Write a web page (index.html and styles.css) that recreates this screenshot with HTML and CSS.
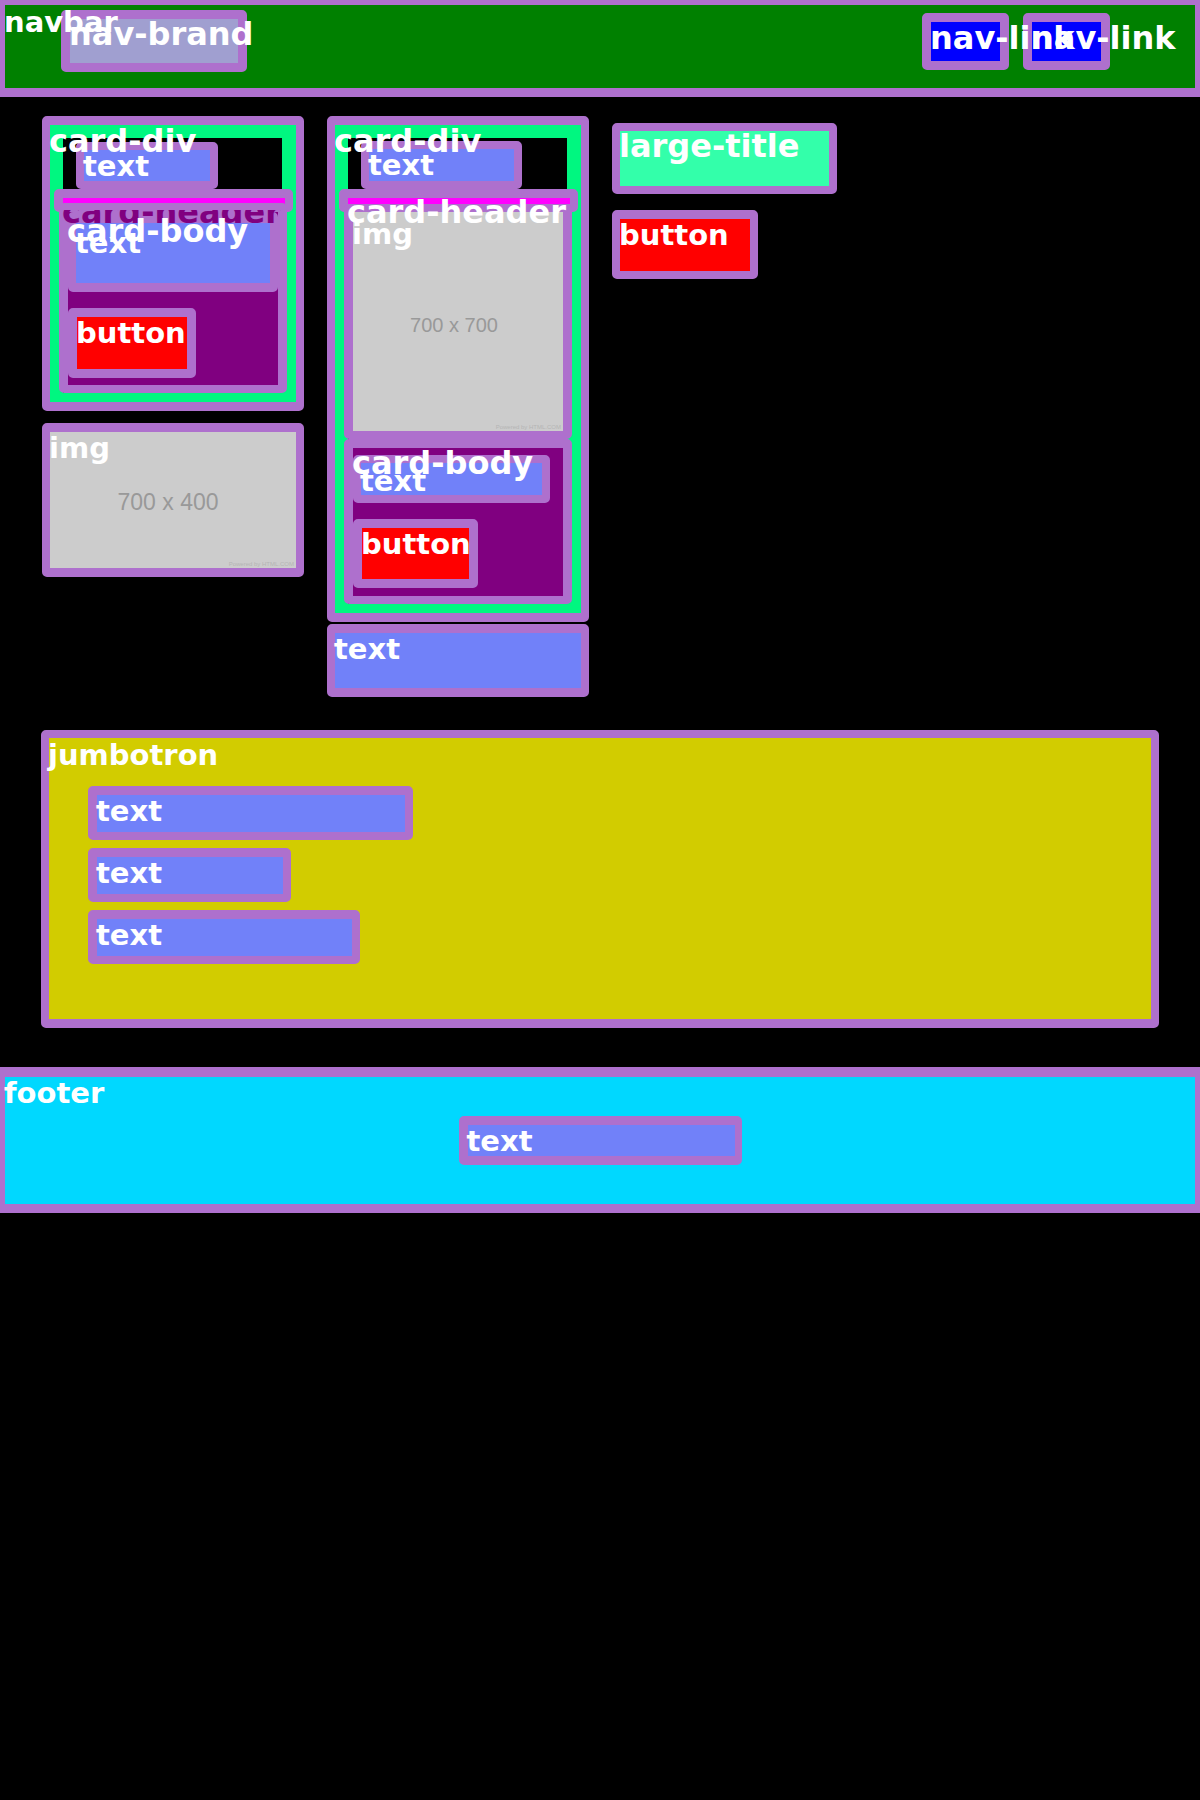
FILE: index.html
```html
<!DOCTYPE html>
<html lang="en">
<head>
  <meta charset="UTF-8">
  <title>Layout Wireframe</title>
  <link rel="stylesheet" href="styles.css">
</head>
<body>
  <nav class="navbar box">
    <span class="lbl">navbar</span>
    <div class="nav-brand box"><span class="lbl lbl-dash">nav-brand</span></div>
    <div class="nav-links">
      <div class="nav-link box"><span class="lbl lbl-dash">nav-link</span></div>
      <div class="nav-link box"><span class="lbl lbl-dash">nav-link</span></div>
    </div>
  </nav>

  <main class="main">
    <div class="col">
      <div class="card-div box">
        <span class="lbl lbl-dash">card-div</span>
        <div class="card-content">
          <div class="text card-text card-text-a box"><span class="lbl">text</span></div>
          <div class="card-header box"><span class="lbl lbl-dash lbl-buried">card-header</span></div>
          <div class="card-body card-body-a box">
            <span class="lbl lbl-dash">card-body</span>
            <div class="text body-text-a box"><span class="lbl">text</span></div>
            <div class="button btn-a box"><span class="lbl">button</span></div>
          </div>
        </div>
      </div>
      <div class="img img-wide box">
        <span class="lbl">img</span>
        <span class="ph-text ph-400">700 x 400</span>
        <span class="ph-credit">Powered by HTML.COM</span>
      </div>
    </div>

    <div class="col">
      <div class="card-div box">
        <span class="lbl lbl-dash">card-div</span>
        <div class="card-content">
          <div class="text card-text card-text-b box"><span class="lbl">text</span></div>
          <div class="card-header box"><span class="lbl lbl-dash">card-header</span></div>
          <div class="img img-card box">
            <span class="lbl">img</span>
            <span class="ph-text">700 x 700</span>
            <span class="ph-credit">Powered by HTML.COM</span>
          </div>
          <div class="card-body card-body-b box">
            <span class="lbl lbl-dash">card-body</span>
            <div class="text body-text-b box"><span class="lbl">text</span></div>
            <div class="button btn-b box"><span class="lbl">button</span></div>
          </div>
        </div>
      </div>
      <div class="text col-text box"><span class="lbl">text</span></div>
    </div>

    <div class="col col-side">
      <div class="large-title box"><span class="lbl lbl-dash">large-title</span></div>
      <div class="button side-button box"><span class="lbl">button</span></div>
    </div>
  </main>

  <section class="jumbotron box">
    <span class="lbl">jumbotron</span>
    <div class="text jumbo-text jt-long box"><span class="lbl">text</span></div>
    <div class="text jumbo-text jt-short box"><span class="lbl">text</span></div>
    <div class="text jumbo-text jt-mid box"><span class="lbl">text</span></div>
  </section>

  <footer class="footer box">
    <span class="lbl">footer</span>
    <div class="text footer-text box"><span class="lbl">text</span></div>
  </footer>
</body>
</html>
```

FILE: styles.css
```css
* {
  box-sizing: border-box;
}
body {
  margin: 0;
  background: #000;
  overflow-x: hidden;
  font-family: "DejaVu Sans", sans-serif;
}

/* annotated boxes */
.box {
  position: relative;
  border: 8px solid #ae70cd;
  border-radius: 5px;
}
.lbl {
  position: absolute;
  top: 2px;
  left: -1px;
  z-index: 1;
  color: #fff;
  font: bold 29px/1 "DejaVu Sans", sans-serif;
  white-space: nowrap;
}
.lbl-dash {
  font-size: 32px;
  top: -1px;
}
.text {
  background: #7181f9;
}
.button {
  background: #ff0000;
}

/* navbar */
.navbar {
  display: flex;
  align-items: flex-start;
  height: 101px;
  margin: -4px -4px 0;
  padding: 5px 85px 0 56px;
  border-width: 9px;
  background: #008000;
}
.navbar > .lbl {
  top: 3px;
}
.nav-brand {
  width: 186px;
  height: 62px;
  border-width: 9px;
  background: #a09fd0;
}
.nav-links {
  display: flex;
  gap: 14px;
  margin: 3px 0 0 auto;
}
.nav-link {
  width: 87px;
  height: 57px;
  border-width: 9px;
  background: #0000ff;
}
.nav-link .lbl {
  top: 0;
}

/* cards */
.main {
  display: flex;
  align-items: flex-start;
  gap: 23px;
  padding: 19px 0 0 42px;
}
.col {
  display: flex;
  flex-direction: column;
  align-items: flex-start;
  width: 262px;
}
.col-side {
  width: 225px;
  padding-top: 7px;
}
.card-div {
  width: 262px;
  border-width: 9px 8px;
  padding: 13px 14px 9px 13px;
  background: #00f780;
}
.card-div > .lbl {
  top: 0;
}
.card-content {
  background: #000;
  padding-top: 3px;
}
.card-text {
  height: 48px;
  margin-left: 13px;
}
.card-text-a {
  width: 142px;
  height: 47px;
  margin-top: 1px;
}
.card-text-b {
  width: 161px;
}
.card-header {
  height: 23px;
  margin: 0 -11px 0 -9px;
  border-width: 9px 8px 8px 9px;
  background: #ff00ff;
}
.card-header .lbl {
  top: -2px;
}
.lbl-buried {
  top: -1px;
  color: #800080;
  clip-path: inset(14px 0 0 0);
}
.card-body {
  margin: 0 -5px 0 -4px;
  border-width: 9px 9px 8px;
  background: #800080;
}
.card-body-a {
  margin-top: -9px;
  padding-bottom: 7px;
}
.card-body-a > .lbl {
  top: 3px;
}
.card-body-b {
  padding: 7px 0 8px;
}
.body-text-a {
  height: 80px;
  border-width: 11px 8px 9px;
}
.body-text-a .lbl {
  top: 6px;
}
.body-text-b {
  width: 197px;
  height: 48px;
}
.body-text-b .lbl {
  top: 4px;
}
.card-body .button {
  margin-top: 16px;
  border-width: 9px;
}
.btn-a {
  width: 128px;
  height: 70px;
}
.btn-b {
  width: 125px;
  height: 69px;
}

/* placeholder images */
.img {
  display: flex;
  align-items: center;
  justify-content: center;
  overflow: hidden;
  background: #ccc;
}
.img-card {
  height: 235px;
  margin: -8px -5px 0 -4px;
  padding: 8px 8px 0 0;
  border-width: 8px 9px;
}
.img-card .lbl {
  top: 8px;
}
.img-wide {
  width: 262px;
  height: 154px;
  margin-top: 12px;
  padding: 4px 10px 0 0;
  border-width: 9px 8px;
}
.ph-text {
  color: #999;
  font: 20px "Liberation Sans", Arial, sans-serif;
}
.ph-400 {
  font-size: 23px;
}
.ph-credit {
  position: absolute;
  right: 2px;
  bottom: 1px;
  color: #b5b5b5;
  font: 6px "Liberation Sans", Arial, sans-serif;
}

.col-text {
  width: 262px;
  height: 73px;
  margin-top: 2px;
  border-width: 9px 8px;
}
.large-title {
  width: 225px;
  height: 71px;
  background: #33ffaa;
}
.side-button {
  width: 146px;
  height: 69px;
  margin-top: 16px;
  border-width: 9px 8px 8px;
}

/* jumbotron */
.jumbotron {
  display: flex;
  flex-direction: column;
  align-items: flex-start;
  gap: 8px;
  height: 298px;
  margin: 33px 41px 0;
  padding: 48px 0 0 39px;
  border-width: 8px 8px 9px;
  background: #d2cc00;
}
.jumbotron > .lbl {
  top: 3px;
}
.jumbo-text {
  height: 54px;
  border-width: 9px 8px 8px 9px;
}
.jt-long {
  width: 325px;
}
.jt-short {
  width: 203px;
}
.jt-mid {
  width: 272px;
}

/* footer */
.footer {
  display: flex;
  align-items: center;
  justify-content: center;
  height: 146px;
  margin: 39px -4px 0;
  border-width: 10px 9px 9px;
  background: #00d8ff;
}
.footer-text {
  width: 283px;
  height: 49px;
  border-width: 9px 7px 9px 9px;
}
```
